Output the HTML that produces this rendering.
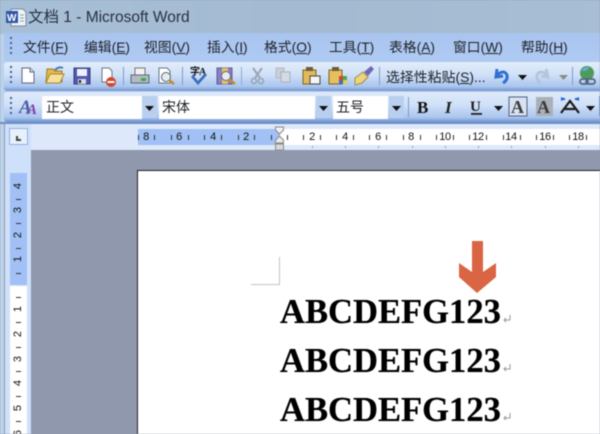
<!DOCTYPE html>
<html><head><meta charset="utf-8">
<style>
html,body{margin:0;padding:0}
body{width:600px;height:434px;overflow:hidden;position:relative;background:#8f98ad;font-family:"Liberation Sans","Noto Sans CJK SC",sans-serif}
#w{position:absolute;left:0;top:0;width:600px;height:434px;overflow:hidden;filter:blur(.45px)}
.a{position:absolute}
.t{position:absolute;white-space:nowrap;color:#20242b;font-size:13.8px;line-height:16px}
.g{position:absolute;width:2px;height:2px;background:#3f5f94;box-shadow:0 5px #3f5f94,0 10px #3f5f94,0 15px #3f5f94}
.n{position:absolute;font-size:11px;line-height:12px;color:#111;text-align:center;width:16px;letter-spacing:-.4px}
.v{position:absolute;font-size:11px;line-height:12px;color:#111;width:16px;text-align:center;transform:rotate(-90deg)}
.k{position:absolute;background:#333;width:1px;height:5px}
.h{position:absolute;background:#333;width:5px;height:1px}
.p{position:absolute;font-family:"Liberation Serif",serif;font-weight:bold;font-size:34.6px;line-height:38px;color:#000;left:280px;white-space:nowrap;text-shadow:0 0 .5px #000}
svg{position:absolute;overflow:visible}
</style></head><body><div id="w">
<!-- title -->
<div class="a" style="left:0;top:0;width:600px;height:34px;background:linear-gradient(90deg,#a8bfd8,#a3bad2 50%,#a8bed4)"></div>
<svg style="left:5px;top:8px" width="22" height="20" viewBox="0 0 22 20"><path d="M6 1h12l3 3v14H6z" fill="#eef1f6" stroke="#7d8aa0"/><rect x="1" y="3" width="12" height="12" fill="#2f56a8"/><text x="2" y="13" font-size="10" font-weight="bold" fill="#fff" font-family="Liberation Sans">W</text><path d="M15 7h4M15 10h4M15 13h4" stroke="#8aa"/></svg>
<div class="t" style="left:28px;top:10px;font-size:15.5px;color:#28313e">文档 1 - Microsoft Word</div>
<!-- left strip -->
<div class="a" style="left:0;top:34px;width:600px;height:400px;background:#bcd2ea"></div>
<!-- menu bar -->
<div class="a" style="left:4px;top:33px;width:596px;height:29px;background:linear-gradient(#a9c5ef,#afcaf3)"></div>
<div class="g" style="left:10px;top:37px"></div>
<div class="t" style="left:23px;top:40px">文件(<u>F</u>)</div>
<div class="t" style="left:84px;top:40px">编辑(<u>E</u>)</div>
<div class="t" style="left:144px;top:40px">视图(<u>V</u>)</div>
<div class="t" style="left:207px;top:40px">插入(<u>I</u>)</div>
<div class="t" style="left:264px;top:40px">格式(<u>O</u>)</div>
<div class="t" style="left:329px;top:40px">工具(<u>T</u>)</div>
<div class="t" style="left:389px;top:40px">表格(<u>A</u>)</div>
<div class="t" style="left:453px;top:40px">窗口(<u>W</u>)</div>
<div class="t" style="left:521px;top:40px">帮助(<u>H</u>)</div>
<!-- toolbar 1 -->
<div class="a" style="left:4px;top:62px;width:596px;height:29px;border-radius:3px 0 0 3px;background:linear-gradient(#e2edfb,#cfe0f7 45%,#aac5ee 85%,#6f93cf)"></div>
<div class="g" style="left:10px;top:66px"></div>
<svg style="left:0;top:60px" width="600" height="30" viewBox="0 0 600 30">
<path d="M22 8h8l4 4v11H22z" fill="#fff" stroke="#5c667c"/><path d="M30 8v4h4" fill="#dde" stroke="#5c667c"/>
<path d="M46 22l1-13h6l2 2h7v11z" fill="#e3b84e" stroke="#9c7e2e"/><path d="M46 23l4-9h14l-4 9z" fill="#f7e09a" stroke="#a98a35"/><path d="M55 10q4-4 8-2" fill="none" stroke="#4c78b8" stroke-width="2"/>
<rect x="74" y="8" width="16" height="16" fill="#5458ae" stroke="#363b80"/><rect x="77" y="9" width="10" height="7" fill="#eef0fa"/><rect x="78" y="19" width="8" height="5" fill="#d8dbe6"/><rect x="79" y="20" width="2" height="3" fill="#222"/>
<path d="M102 8h7l3 3v11h-10z" fill="#fff" stroke="#6a7388"/><circle cx="111" cy="22" r="5" fill="#d8452b"/><rect x="107.500" y="21" width="7" height="2" fill="#fff"/>
<rect x="123" y="7" width="1" height="18" fill="#7c9bc9"/>
<path d="M135 8h10v7h-10z" fill="#f2f2f2" stroke="#777"/><path d="M131 15h18v8h-18z" fill="#b3bac4" stroke="#5d6675"/><rect x="141" y="18" width="5" height="3" fill="#35b045"/>
<path d="M159 8h8l3 3v12h-11z" fill="#fff" stroke="#6a7388"/><circle cx="166" cy="17" r="4.500" fill="#e5ebf5" stroke="#566"/><path d="M169 20l5 4" stroke="#c68a2a" stroke-width="2.500"/>
<rect x="182" y="7" width="1" height="18" fill="#7c9bc9"/>
<text x="190" y="15" font-size="10" font-weight="bold" fill="#111" font-family="Noto Sans CJK SC">字</text><text x="199" y="15" font-size="10" font-weight="bold" fill="#111" font-family="Liberation Serif">A</text><path d="M192 16l6 7 8-9" fill="none" stroke="#3c6fc0" stroke-width="2.800"/>
<rect x="217" y="8" width="15" height="16" fill="#8a80c4" stroke="#5e5a95"/><rect x="222" y="8" width="6" height="16" fill="#e6c25e"/><circle cx="226" cy="16" r="4.500" fill="#e5ebf3" stroke="#667"/><path d="M229 19l6 5" stroke="#c68a2a" stroke-width="2.500"/>
<rect x="241" y="7" width="1" height="18" fill="#8dabd6"/>
<path d="M253 8l7 10M262 8l-7 10" stroke="#9aa5b6" stroke-width="2"/><circle cx="254" cy="21" r="2.500" fill="none" stroke="#9aa5b6" stroke-width="1.600"/><circle cx="261" cy="21" r="2.500" fill="none" stroke="#9aa5b6" stroke-width="1.600"/>
<rect x="276" y="8" width="8" height="10" fill="#c9cfd9" stroke="#b3bac6"/><rect x="281" y="12" width="9" height="10" fill="#d4d9e2" stroke="#a9b1bf"/>
<rect x="303" y="10" width="13" height="14" fill="#e1b959" stroke="#7a622a"/><rect x="306" y="7" width="7" height="4" fill="#6e5e34"/><rect x="310" y="16" width="10" height="8" fill="#f4f4f4" stroke="#444"/>
<rect x="329" y="10" width="13" height="14" fill="#e6bf5f" stroke="#7a622a"/><rect x="332" y="7" width="7" height="4" fill="#6e5e34"/><rect x="339" y="16" width="4" height="4" fill="#d9432e"/><rect x="343" y="16" width="4" height="4" fill="#4aa84e"/><rect x="339" y="20" width="4" height="4" fill="#3a6fc8"/><rect x="343" y="20" width="4" height="4" fill="#eccd3f"/>
<path d="M355 18l8-6 5 5-6 6-7 2z" fill="#eed57c" stroke="#a08c4a"/><path d="M364 12l7-6 3 3-6 7z" fill="#6e6ab5"/>
<rect x="379" y="7" width="1" height="18" fill="#7c9bc9"/>
<path d="M497 9l-1 8 7-1M497 15q7-6 10 0q1 5-4 8" fill="none" stroke="#2f70d2" stroke-width="3"/>
<path d="M518 15h9l-4.500 5z" fill="#111"/>
<path d="M546 9l2 8-7-1M547 15q-7-6-10 0q-1 5 4 8" fill="none" stroke="#b5c6dc" stroke-width="3"/>
<path d="M559 15h9l-4.500 5z" fill="#8b8b84"/>
<rect x="572" y="7" width="1" height="18" fill="#7c9bc9"/>
<circle cx="587" cy="13" r="7" fill="#4d9a5a"/><path d="M581 11q4-5 8-4q-2 4-4 4z" fill="#6aa9e2"/><rect x="580" y="19" width="8" height="5" rx="2.500" fill="none" stroke="#55657c" stroke-width="1.800"/><rect x="586" y="19" width="9" height="5" rx="2.500" fill="none" stroke="#55657c" stroke-width="1.800"/>
</svg>
<div class="t" style="left:386px;top:69px;font-size:13.9px">选择性粘贴(<u>S</u>)...</div>
<!-- toolbar 2 -->
<div class="a" style="left:4px;top:92px;width:596px;height:30px;border-radius:3px 0 0 3px;background:linear-gradient(#dfeafa,#cfe0f7 45%,#aac5ee 85%,#6f93cf)"></div>
<div class="g" style="left:10px;top:97px"></div>
<svg style="left:0;top:92px" width="600" height="30" viewBox="0 0 600 30">
<text x="19" y="21" font-size="19" font-weight="bold" font-style="italic" fill="#4b5fa8" font-family="Liberation Serif">A</text><text x="27" y="22" font-size="15" font-weight="bold" font-style="italic" fill="#7d3fa8" font-family="Liberation Serif">A</text>
<rect x="142" y="4" width="15" height="22" fill="#b9cff0"/><path d="M145 14h9l-4.500 5z" fill="#111"/>
<rect x="316" y="4" width="15" height="22" fill="#b9cff0"/><path d="M319 14h9l-4.500 5z" fill="#111"/>
<rect x="389" y="4" width="15" height="22" fill="#b9cff0"/><path d="M392 14h9l-4.500 5z" fill="#111"/>
<rect x="408" y="5" width="1" height="20" fill="#7c9bc9"/>
<text x="417" y="21" font-size="17" font-weight="bold" fill="#111" font-family="Liberation Serif">B</text>
<text x="445" y="21" font-size="17" font-weight="bold" font-style="italic" fill="#222" font-family="Liberation Serif">I</text>
<text x="470" y="19" font-size="15" font-weight="bold" fill="#222" font-family="Liberation Serif">U</text><rect x="471" y="21" width="11" height="1.800" fill="#222"/>
<path d="M494 14h9l-4.500 5z" fill="#111"/>
<rect x="509" y="5" width="18" height="19" fill="#d8e3f2" stroke="#4d627f"/><text x="511" y="21" font-size="18" font-weight="bold" fill="#3c3c3c" font-family="Liberation Serif">A</text>
<rect x="536" y="5" width="17" height="19" fill="#aab0b8"/><text x="537" y="21" font-size="18" font-weight="bold" fill="#3c3c3c" font-family="Liberation Serif">A</text>
<path d="M561 21l9-12 9 12M565 17h10" fill="none" stroke="#1c1c1c" stroke-width="2.200"/><path d="M561 5l4 2-4 2zM579 5l-4 2 4 2z" fill="#1b63d0"/><path d="M562 7h3M575 7h3" stroke="#1b63d0" stroke-width="2"/>
<path d="M586 14h9l-4.500 5z" fill="#111"/>
<rect x="599" y="4" width="1" height="20" fill="#7c9bc9"/>
</svg>
<div class="a" style="left:42px;top:96px;width:100px;height:23px;background:#fff"></div>
<div class="t" style="left:46px;top:99px;font-size:14px">正文</div>
<div class="a" style="left:159px;top:96px;width:156px;height:23px;background:#fff"></div>
<div class="t" style="left:162px;top:99px;font-size:14px">宋体</div>
<div class="a" style="left:333px;top:96px;width:55px;height:23px;background:#fff"></div>
<div class="t" style="left:336px;top:99px;font-size:14px">五号</div>
<!-- ruler row -->
<div class="a" style="left:4px;top:124px;width:596px;height:26px;background:#dde9fb"></div>
<div class="a" style="left:0;top:122px;width:600px;height:2px;background:#6e8fc5"></div>
<div class="a" style="left:4px;top:124px;width:1px;height:310px;background:#8e98a8"></div>
<div class="a" style="left:5px;top:124px;width:26px;height:310px;background:#cfe0fa"></div>
<div class="a" style="left:9px;top:128px;width:19px;height:17px;background:#e8f0fc;border:1px solid #8fb0e4;box-sizing:border-box"></div>
<div class="a" style="left:16px;top:136px;width:2px;height:5px;background:#444"></div><div class="a" style="left:16px;top:139px;width:5px;height:2px;background:#444"></div>
<div class="a" style="left:138px;top:129px;width:142px;height:16px;background:#a1c0f5"></div>
<div class="a" style="left:280px;top:129px;width:320px;height:16px;background:#fff"></div>
<svg style="left:274px;top:126px" width="12" height="26" viewBox="0 0 12 26"><path d="M1.5 1h8v3l-4 4-4-4z" fill="#f2f2f2" stroke="#888"/><path d="M5.500 10l4 4v3h-8v-3z" fill="#e8e8e8" stroke="#888"/><rect x="1.500" y="18" width="8" height="6" fill="#d9d9d9" stroke="#888"/></svg>
<div class="n" style="left:138px;top:131px">8</div><div class="n" style="left:171px;top:131px">6</div><div class="n" style="left:205px;top:131px">4</div><div class="n" style="left:238px;top:131px">2</div>
<div class="k" style="left:138px;top:135px"></div><div class="k" style="left:154px;top:135px"></div><div class="k" style="left:171px;top:135px"></div><div class="k" style="left:188px;top:135px"></div><div class="k" style="left:204px;top:135px"></div><div class="k" style="left:221px;top:135px"></div><div class="k" style="left:238px;top:135px"></div><div class="k" style="left:254px;top:135px"></div><div class="k" style="left:271px;top:135px"></div><div class="k" style="left:287px;top:135px"></div>
<div class="n" style="left:304px;top:131px">2</div><div class="n" style="left:337px;top:131px">4</div><div class="n" style="left:370px;top:131px">6</div><div class="n" style="left:403px;top:131px">8</div><div class="n" style="left:437px;top:131px">10</div><div class="n" style="left:470px;top:131px">12</div><div class="n" style="left:503px;top:131px">14</div><div class="n" style="left:537px;top:131px">16</div><div class="n" style="left:570px;top:131px">18</div>
<div class="k" style="left:304px;top:135px;display:none"></div><div class="k" style="left:304px;top:135px;left:320px"></div><div class="k" style="left:303px;top:135px"></div><div class="k" style="left:337px;top:135px;left:336px"></div><div class="k" style="left:353px;top:135px"></div><div class="k" style="left:369px;top:135px"></div><div class="k" style="left:386px;top:135px"></div><div class="k" style="left:403px;top:135px"></div><div class="k" style="left:420px;top:135px"></div><div class="k" style="left:436px;top:135px"></div><div class="k" style="left:453px;top:135px"></div><div class="k" style="left:469px;top:135px"></div><div class="k" style="left:486px;top:135px"></div><div class="k" style="left:503px;top:135px"></div><div class="k" style="left:520px;top:135px"></div><div class="k" style="left:536px;top:135px"></div><div class="k" style="left:553px;top:135px"></div><div class="k" style="left:569px;top:135px"></div><div class="k" style="left:586px;top:135px"></div>
<div class="k" style="left:312px;top:146px;height:2px;background:#999"></div><div class="k" style="left:345px;top:146px;height:2px;background:#999"></div><div class="k" style="left:378px;top:146px;height:2px;background:#999"></div><div class="k" style="left:412px;top:146px;height:2px;background:#999"></div><div class="k" style="left:445px;top:146px;height:2px;background:#999"></div><div class="k" style="left:478px;top:146px;height:2px;background:#999"></div><div class="k" style="left:511px;top:146px;height:2px;background:#999"></div><div class="k" style="left:545px;top:146px;height:2px;background:#999"></div><div class="k" style="left:578px;top:146px;height:2px;background:#999"></div>
<!-- workspace -->
<div class="a" style="left:31px;top:150px;width:569px;height:284px;background:#8f98ad"></div>
<!-- vertical ruler -->
<div class="a" style="left:10px;top:173px;width:17px;height:112px;background:#a1c0f5"></div>
<div class="a" style="left:10px;top:286px;width:17px;height:148px;background:#fff"></div>
<div class="v" style="left:10px;top:180px">4</div><div class="v" style="left:10px;top:204px">3</div><div class="v" style="left:10px;top:229px">2</div><div class="v" style="left:10px;top:253px">1</div>
<div class="v" style="left:10px;top:303px">1</div><div class="v" style="left:10px;top:328px">2</div><div class="v" style="left:10px;top:353px">3</div><div class="v" style="left:10px;top:377px">4</div><div class="v" style="left:10px;top:402px">5</div><div class="v" style="left:10px;top:427px">6</div>
<div class="h" style="left:16px;top:199px"></div><div class="h" style="left:16px;top:223px"></div><div class="h" style="left:16px;top:248px"></div><div class="h" style="left:16px;top:273px"></div><div class="h" style="left:16px;top:297px"></div><div class="h" style="left:16px;top:322px"></div><div class="h" style="left:16px;top:347px"></div><div class="h" style="left:16px;top:371px"></div><div class="h" style="left:16px;top:396px"></div><div class="h" style="left:16px;top:421px"></div>
<!-- page -->
<div class="a" style="left:137px;top:170px;width:463px;height:264px;background:#fff;border-left:1px solid #222;border-top:1px solid #222;box-sizing:border-box"></div>
<div class="a" style="left:251px;top:284px;width:28px;height:1px;background:#c4c4c4"></div>
<div class="a" style="left:279px;top:257px;width:1px;height:28px;background:#c4c4c4"></div>
<div class="p" style="top:293px">ABCDEFG123</div>
<div class="p" style="top:342px">ABCDEFG123</div>
<div class="p" style="top:391px">ABCDEFG123</div>
<svg style="left:501px;top:312px" width="12" height="110" viewBox="0 0 12 110" fill="none" stroke="#999"><path d="M9 3v5H3M5 6L3 8l2 2"/><path d="M9 52v5H3M5 55L3 57l2 2"/><path d="M9 101v5H3M5 104l-2 2 2 2"/></svg>
<svg style="left:458px;top:241px" width="40" height="54" viewBox="0 0 40 54"><path d="M14 0h11v31l13-9v14L19 52 1 36V22l13 9z" fill="#d96544"/></svg>
</div></body></html>
